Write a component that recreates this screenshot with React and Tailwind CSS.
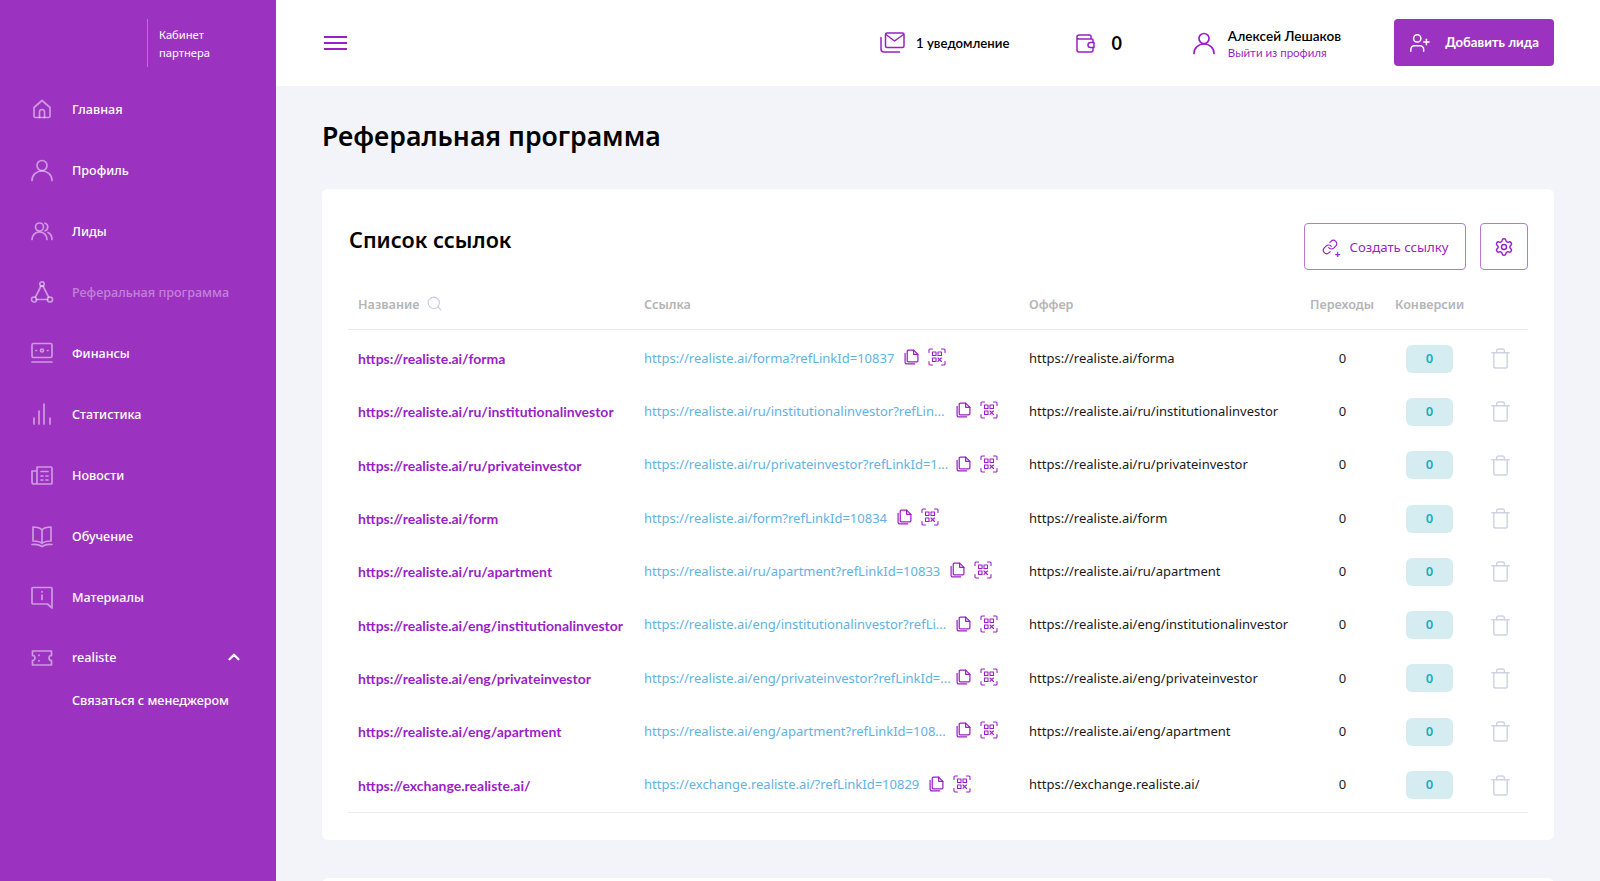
import { ChevronUp, Search, Trash, Settings, UserPlus, Link as LinkIcon } from "lucide-react";

const menu = [
  { label: "Главная", icon: HomeIcon },
  { label: "Профиль", icon: UserIcon },
  { label: "Лиды", icon: UsersIcon },
  { label: "Реферальная программа", icon: NodesIcon, muted: true },
  { label: "Финансы", icon: MoneyIcon },
  { label: "Статистика", icon: BarsIcon },
  { label: "Новости", icon: NewsIcon },
  { label: "Обучение", icon: BookIcon },
  { label: "Материалы", icon: InfoIcon },
];

const links = [
  ["https://realiste.ai/forma", "https://realiste.ai/forma?refLinkId=10837", false],
  ["https://realiste.ai/ru/institutionalinvestor", "https://realiste.ai/ru/institutionalinvestor?refLin...", true],
  ["https://realiste.ai/ru/privateinvestor", "https://realiste.ai/ru/privateinvestor?refLinkId=1...", true],
  ["https://realiste.ai/form", "https://realiste.ai/form?refLinkId=10834", false],
  ["https://realiste.ai/ru/apartment", "https://realiste.ai/ru/apartment?refLinkId=10833", false],
  ["https://realiste.ai/eng/institutionalinvestor", "https://realiste.ai/eng/institutionalinvestor?refLi...", true],
  ["https://realiste.ai/eng/privateinvestor", "https://realiste.ai/eng/privateinvestor?refLinkId=...", true],
  ["https://realiste.ai/eng/apartment", "https://realiste.ai/eng/apartment?refLinkId=108...", true],
  ["https://exchange.realiste.ai/", "https://exchange.realiste.ai/?refLinkId=10829", false],
];

function Svg({ children, className, size = 24 }) {
  return (
    <svg width={size} height={size} viewBox="0 0 24 24" fill="none" stroke="currentColor" strokeWidth="1.7" strokeLinecap="round" strokeLinejoin="round" className={className}>
      {children}
    </svg>
  );
}

function HomeIcon() {
  return <Svg><path d="M4 10.500 12 3.500l8 7V19a1.500 1.500 0 0 1-1.500 1.500h-13A1.500 1.500 0 0 1 4 19z" /><path d="M9.500 20.500V15a2.500 2.500 0 0 1 5 0v5.500" /></Svg>;
}
function UserIcon() {
  return <Svg><circle cx="12" cy="7.500" r="5" /><path d="M2 22.500c0-5.500 4.500-9.500 10-9.500s10 4 10 9.500" /></Svg>;
}
function UsersIcon() {
  return <Svg><circle cx="9.500" cy="8" r="4" /><path d="M2 20.500c0-4.500 3.300-7.500 7.500-7.500s7.500 3 7.500 7.500" /><path d="M15 4.200a4 4 0 0 1 0 7.600M18 13.500c2.500 1.200 4 3.800 4 7" /></Svg>;
}
function NodesIcon() {
  return <Svg><circle cx="12" cy="4" r="2.200" /><circle cx="4" cy="19.500" r="2.500" /><circle cx="20" cy="19.500" r="2.500" /><path d="M11 6 5.300 17.300M13 6l5.700 11.300M6.500 19.500h11" /></Svg>;
}
function MoneyIcon() {
  return <Svg><rect x="2" y="2.500" width="20" height="14" rx="1.500" /><circle cx="12" cy="9.500" r="1.500" /><path d="M6 9.500h.5M17.500 9.500h.5M2 21h20" /></Svg>;
}
function BarsIcon() {
  return <Svg><path d="M4 16v6M9 9v13M14 2v20M20 16v6" /></Svg>;
}
function NewsIcon() {
  return <Svg><path d="M7 4h14a1 1 0 0 1 1 1v15a1 1 0 0 1-1 1H4a2 2 0 0 1-2-2V8h5zM7 8v11a2 2 0 0 1-2 2" /><path d="M11 8.500h7M11 13h2M16 13h2M11 17h2M16 17h2" /></Svg>;
}
function BookIcon() {
  return <Svg><path d="M12 6C10 3.500 6 3 3 3v14c3 0 7 .5 9 2.500 2-2 6-2.500 9-2.500V3c-3 0-7 .5-9 3zM12 6v13.500" /><path d="M2 20.500c3.500-.5 7 0 10 2 3-2 6.500-2.500 10-2" /></Svg>;
}
function InfoIcon() {
  return <Svg><path d="M3 2.500h18a1 1 0 0 1 1 1V23l-4.500-4H3a1 1 0 0 1-1-1V3.500a1 1 0 0 1 1-1z" /><path d="M12 6.500v.5M12 10v4.500" /></Svg>;
}
function TicketIcon() {
  return <Svg><path d="M2.500 5h19v4.500a2.500 2.500 0 0 0 0 5V19h-19v-4.500a2.500 2.500 0 0 0 0-5z" /><path d="M9 9v.5M9 14.500v.5" /></Svg>;
}
function MailIcon() {
  return (
    <svg width="25" height="21" viewBox="0 0 25 21" fill="none" stroke="currentColor" strokeWidth="1.500" strokeLinecap="round" strokeLinejoin="round">
      <rect x="5.500" y="1" width="18.500" height="14.500" rx="1.500" />
      <path d="m6 2.500 8.500 6.500 9-6.500" />
      <path d="M1 5.500V17a3 3 0 0 0 3 3h15.500" />
    </svg>
  );
}
function WalletIcon() {
  return (
    <svg width="19" height="19" viewBox="0 0 19 19" fill="none" stroke="currentColor" strokeWidth="1.500" strokeLinecap="round" strokeLinejoin="round">
      <path d="M15 5V2.500A1.500 1.500 0 0 0 13.500 1H3a2 2 0 0 0-2 2v13a2 2 0 0 0 2 2h12a2 2 0 0 0 2-2v-2.500M1.500 4.500 3 5h13a1 1 0 0 1 1 1v2.500" />
      <path d="M18 8.500h-3.500a2.500 2.500 0 0 0 0 5H18z" />
    </svg>
  );
}
function CopyIcon() {
  return (
    <svg width="15" height="16" viewBox="0 0 14 15" fill="none" stroke="currentColor" strokeWidth="1.150" strokeLinecap="round" strokeLinejoin="round">
      <path d="M4 1h5l4 4v6a1 1 0 0 1-1 1H4a1 1 0 0 1-1-1V2a1 1 0 0 1 1-1z" />
      <path d="M9 1v4h4" />
      <path d="M1 4v8.500A1.500 1.500 0 0 0 2.500 14H10" />
    </svg>
  );
}
function QrIcon() {
  return (
    <svg width="18" height="18" viewBox="0 0 18 18" fill="none" stroke="currentColor" strokeWidth="1.100" strokeLinecap="round" strokeLinejoin="round">
      <path d="M1 4.500V2a1 1 0 0 1 1-1h2.500M13.500 1H16a1 1 0 0 1 1 1v2.500M17 13.500V16a1 1 0 0 1-1 1h-2.500M4.500 17H2a1 1 0 0 1-1-1v-2.500" />
      <rect x="4.500" y="4" width="3.500" height="3.500" />
      <rect x="10" y="4" width="3.500" height="3.500" />
      <rect x="4.500" y="10" width="3.500" height="3.500" />
      <path d="M10 10l1.500 1.500L13.500 10M10 13.500l1.500-2 2 2" />
    </svg>
  );
}

function SideItem({ label, icon: Icon, muted }) {
  return (
    <div className="h-[61px] flex items-center pl-[30px] shrink-0">
      <span className="w-[42px] flex justify-start text-white/50 -mt-[1px]">
        <Icon />
      </span>
      <span className={muted ? "text-[12.600px] font-medium text-white/40 pt-[2px]" : "text-[12.600px] font-medium text-white pt-[2px]"}>{label}</span>
    </div>
  );
}

function Row({ name, href, wide }) {
  return (
    <div className="grid grid-cols-[286px_385px_281px_85px_80px_1fr] items-center h-[53.300px] pl-[10px] text-[13px]">
      <a className="text-[14px] font-bold text-[#9a1fc6] font-['Lato',sans-serif] whitespace-nowrap">{name}</a>
      <div className={wide ? "flex items-center w-[354px] justify-between text-[#62b2e3]" : "flex items-center gap-[10px] text-[#62b2e3]"}>
        <span className="whitespace-nowrap">{href}</span>
        <span className="flex items-center gap-[9px] text-[#9a1fc6] -mt-[3px]">
          <CopyIcon />
          <QrIcon />
        </span>
      </div>
      <span className="text-[#1a1a1a] whitespace-nowrap">{name}</span>
      <span className="text-center text-[#1a1a1a] pr-[20px]">0</span>
      <span className="flex justify-start pl-[11px]">
        <span className="w-[47px] h-[28px] rounded-[6px] bg-[#d5edf0] text-[#14aebf] flex items-center justify-center font-semibold">0</span>
      </span>
      <span className="flex justify-start pl-[14px] text-[#cfd2e2]">
        <Trash size={23} strokeWidth={1.500} />
      </span>
    </div>
  );
}

export default function App() {
  return (
    <div className="flex h-[881px] overflow-hidden bg-[#f3f4f9] font-['Noto_Sans',sans-serif] text-black">
      <aside className="w-[276px] shrink-0 bg-[#9c33c0] flex flex-col">
        <div className="h-[79px] pt-[19px] pl-[147px] shrink-0">
          <div className="border-l border-white/30 h-[48px] pl-[11px] text-[11.200px] leading-[18px] text-white flex flex-col justify-center pt-[2px]">
            <span>Кабинет</span>
            <span>партнера</span>
          </div>
        </div>
        {menu.map((item) => (
          <SideItem key={item.label} {...item} />
        ))}
        <div className="h-[61px] flex items-center pl-[30px] pr-[33px] shrink-0 -mt-[1px]">
          <span className="w-[42px] text-white/50">
            <TicketIcon />
          </span>
          <span className="text-[12.600px] font-medium text-white flex-1 pt-[2px]">realiste</span>
          <ChevronUp size={18} strokeWidth={3} className="text-white -mt-[2px]" />
        </div>
        <div className="pl-[72px] text-[12.600px] font-medium text-white mt-[4px]">Связаться с менеджером</div>
      </aside>

      <div className="flex-1 min-w-0 flex flex-col">
        <header className="h-[86px] shrink-0 bg-white flex items-center pl-[48px] pr-[46px] font-['Lato',sans-serif]">
          <div className="flex flex-col gap-[4px] w-[23px]">
            <span className="h-[2px] bg-[#9a1fc6]"></span>
            <span className="h-[2px] bg-[#9a1fc6]"></span>
            <span className="h-[2px] bg-[#9a1fc6]"></span>
          </div>
          <div className="ml-auto flex items-center gap-[11px] text-[#9a1fc6]">
            <MailIcon />
            <span className="text-[13.200px] font-semibold text-black pt-[2px]">1 уведомление</span>
          </div>
          <div className="ml-[67px] flex items-center gap-[16px] text-[#9a1fc6]">
            <WalletIcon />
            <span className="text-[18px] font-bold text-black">0</span>
          </div>
          <div className="ml-[70px] flex items-center gap-[12px] text-[#9a1fc6]">
            <UserIcon />
            <div className="flex flex-col pt-[1px]">
              <span className="text-[13.600px] font-semibold text-black leading-[18px]">Алексей Лешаков</span>
              <span className="text-[11.500px] leading-[16px]">Выйти из профиля</span>
            </div>
          </div>
          <button className="ml-[53px] -mt-[2px] w-[160px] h-[47px] rounded-[4px] bg-[#9c33c0] text-white flex items-center justify-center gap-[14px] text-[13.200px] font-bold pt-[2px]">
            <UserPlus size={22} strokeWidth={1.600} />
            Добавить лида
          </button>
        </header>

        <main className="flex-1 min-h-0 px-[46px]">
          <h1 className="text-[26.600px] font-semibold leading-[36px] mt-[32px]">Реферальная программа</h1>
          <section className="mt-[35px] h-[651px] bg-white rounded-[6px] px-[26px] pt-[34px]">
            <div className="flex items-start justify-between h-[47px]">
              <h2 className="text-[21.600px] font-semibold leading-[34px] pl-[1px]">Список ссылок</h2>
              <div className="flex gap-[14px] text-[#9a1fc6]">
                <button className="w-[162px] h-[47px] border border-[#b876d6] rounded-[4px] flex items-center justify-center gap-[12px] text-[13.200px] pt-[2px]">
                  <span className="relative -mt-[2px]">
                    <LinkIcon size={16} strokeWidth={1.700} />
                    <span className="absolute -right-[3px] -bottom-[4px] text-[10px] font-bold leading-none">+</span>
                  </span>
                  Создать ссылку
                </button>
                <button className="w-[48px] h-[47px] border border-[#b876d6] rounded-[4px] flex items-center justify-center">
                  <Settings size={20} strokeWidth={1.700} />
                </button>
              </div>
            </div>
            <div className="grid grid-cols-[286px_385px_281px_85px_1fr] items-center h-[59px] pt-[10px] pl-[10px] mt-[1px] border-b border-[#e8ebf5] text-[12.600px] font-semibold text-[#b5b5b5]">
              <span className="flex items-center gap-[7px]">
                Название
                <Search size={17} strokeWidth={1.500} className="text-[#c5cbe0] -mt-[3px]" />
              </span>
              <span>Ссылка</span>
              <span>Оффер</span>
              <span>Переходы</span>
              <span>Конверсии</span>
            </div>
            <div className="border-b border-[#e8ebf5] pt-[2px]">
              {links.map(([name, href, wide]) => (
                <Row key={name} name={name} href={href} wide={wide} />
              ))}
            </div>
          </section>
          <section className="mt-[38px] h-[200px] bg-white rounded-[6px]"></section>
        </main>
      </div>
    </div>
  );
}
